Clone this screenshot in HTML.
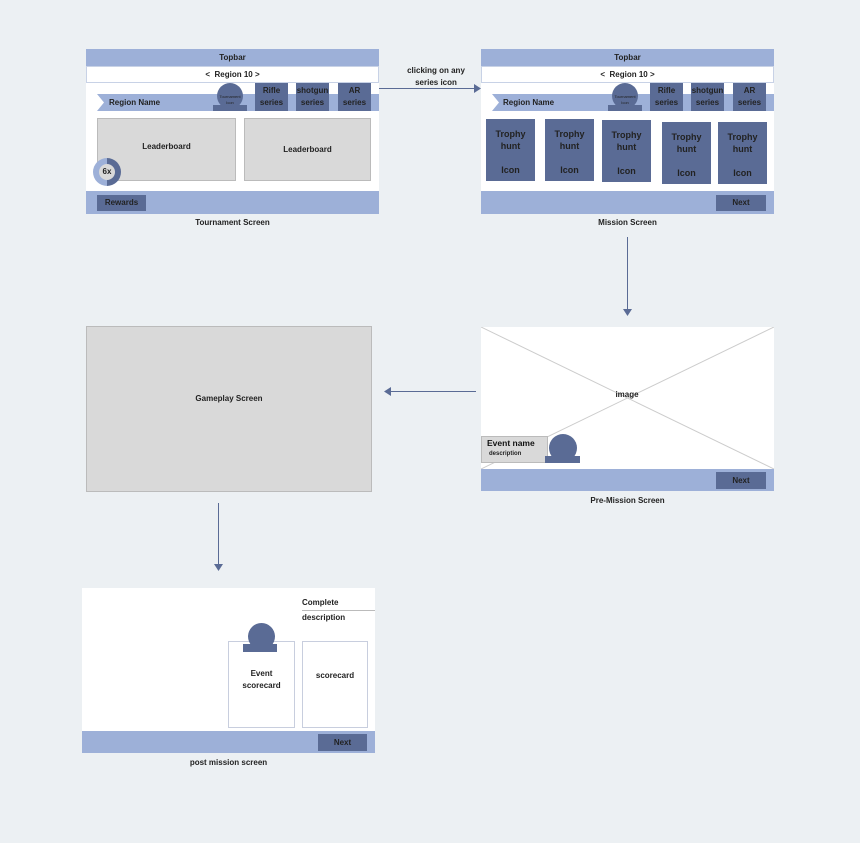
<!DOCTYPE html>
<html><head><meta charset="utf-8"><style>
*{margin:0;padding:0;box-sizing:border-box}
body{width:860px;height:843px;background:#ECF0F3;position:relative;overflow:hidden;font-family:"Liberation Sans",sans-serif;color:#222;font-weight:bold;font-size:8px}
.a{position:absolute}
.c{display:flex;align-items:center;justify-content:center;text-align:center;line-height:1.45}
.lb{background:#9DB0D8}
.dk{background:#5A6B95}
.w{background:#fff}
.lbl{font-size:8px;text-align:center}
.circ{border-radius:50%;background:#5A6B95}
.tiny{font-size:4px;color:#222;font-weight:normal}
</style></head><body>

<!-- Tournament -->
<div class="a w" style="left:86px;top:49px;width:293px;height:165px"></div>
<div class="a lb c" style="left:86px;top:49px;width:293px;height:17px">Topbar</div>
<div class="a w c" style="left:86px;top:66px;width:293px;height:17px;border:1px solid #c8d2e6">&lt;&nbsp; Region 10 &gt;</div>
<svg class="a" style="left:97px;top:94px" width="282" height="17"><polygon points="0,0 282,0 282,17 0,17 7,8.5" fill="#9DB0D8"/></svg>
<div class="a" style="left:109px;top:98px">Region Name</div>
<div class="a circ" style="left:217px;top:83px;width:26px;height:26px"></div>
<div class="a dk" style="left:213px;top:105px;width:34px;height:6px"></div>
<div class="a c tiny" style="left:215px;top:94px;width:30px;line-height:1.6">Tournament<br>Icon</div>
<div class="a dk c" style="left:255px;top:83px;width:33px;height:28px">Rifle<br>series</div>
<div class="a dk c" style="left:296px;top:83px;width:33px;height:28px">shotgun<br>series</div>
<div class="a dk c" style="left:338px;top:83px;width:33px;height:28px">AR<br>series</div>
<div class="a" style="left:97px;top:118px;width:139px;height:63px;background:#D9D9D9;border:1px solid #bbb;text-align:center;padding-top:23px">Leaderboard</div>
<div class="a c" style="left:244px;top:118px;width:127px;height:63px;background:#D9D9D9;border:1px solid #bbb">Leaderboard</div>
<div class="a" style="left:93px;top:158px;width:28px;height:28px;border-radius:50%;background:linear-gradient(90deg,#9DB0D8 50%,#5A6B95 50%)"></div>
<div class="a c" style="left:99px;top:164px;width:16px;height:16px;border-radius:50%;background:#D9D9D9">6x</div>
<div class="a lb" style="left:86px;top:191px;width:293px;height:23px"></div>
<div class="a dk c" style="left:97px;top:195px;width:49px;height:16px">Rewards</div>
<div class="a lbl" style="left:86px;top:218px;width:293px">Tournament Screen</div>

<!-- arrow right -->
<div class="a" style="left:379px;top:88px;width:96px;height:1px;background:#5A6B95"></div>
<svg class="a" style="left:474px;top:84px" width="8" height="9"><polygon points="0,0 7,4.5 0,9" fill="#5A6B95"/></svg>
<div class="a lbl" style="left:396px;top:65px;width:80px;line-height:12px">clicking on any<br>series icon</div>

<!-- Mission -->
<div class="a w" style="left:481px;top:49px;width:293px;height:165px"></div>
<div class="a lb c" style="left:481px;top:49px;width:293px;height:17px">Topbar</div>
<div class="a w c" style="left:481px;top:66px;width:293px;height:17px;border:1px solid #c8d2e6">&lt;&nbsp; Region 10 &gt;</div>
<svg class="a" style="left:492px;top:94px" width="282" height="17"><polygon points="0,0 282,0 282,17 0,17 7,8.5" fill="#9DB0D8"/></svg>
<div class="a" style="left:503px;top:98px">Region Name</div>
<div class="a circ" style="left:612px;top:83px;width:26px;height:26px"></div>
<div class="a dk" style="left:608px;top:105px;width:34px;height:6px"></div>
<div class="a c tiny" style="left:610px;top:94px;width:30px;line-height:1.6">Tournament<br>Icon</div>
<div class="a dk c" style="left:650px;top:83px;width:33px;height:28px">Rifle<br>series</div>
<div class="a dk c" style="left:691px;top:83px;width:33px;height:28px">shotgun<br>series</div>
<div class="a dk c" style="left:733px;top:83px;width:33px;height:28px">AR<br>series</div>
<div class="a dk" style="left:486px;top:119px;width:49px;height:62px;text-align:center;padding-top:9px;font-size:9px;line-height:12px">Trophy<br>hunt<br><br>Icon</div>
<div class="a dk" style="left:545px;top:119px;width:49px;height:62px;text-align:center;padding-top:9px;font-size:9px;line-height:12px">Trophy<br>hunt<br><br>Icon</div>
<div class="a dk" style="left:602px;top:120px;width:49px;height:62px;text-align:center;padding-top:9px;font-size:9px;line-height:12px">Trophy<br>hunt<br><br>Icon</div>
<div class="a dk" style="left:662px;top:122px;width:49px;height:62px;text-align:center;padding-top:9px;font-size:9px;line-height:12px">Trophy<br>hunt<br><br>Icon</div>
<div class="a dk" style="left:718px;top:122px;width:49px;height:62px;text-align:center;padding-top:9px;font-size:9px;line-height:12px">Trophy<br>hunt<br><br>Icon</div>
<div class="a lb" style="left:481px;top:191px;width:293px;height:23px"></div>
<div class="a dk c" style="left:716px;top:195px;width:50px;height:16px">Next</div>
<div class="a lbl" style="left:481px;top:218px;width:293px">Mission Screen</div>

<!-- arrow down -->
<div class="a" style="left:627px;top:237px;width:1px;height:73px;background:#5A6B95"></div>
<svg class="a" style="left:623px;top:309px" width="9" height="8"><polygon points="0,0 9,0 4.5,7" fill="#5A6B95"/></svg>

<!-- Pre-mission -->
<div class="a w" style="left:481px;top:327px;width:293px;height:164px"></div>
<svg class="a" style="left:481px;top:327px" width="293" height="142"><line x1="0" y1="0" x2="293" y2="142" stroke="#ccc" stroke-width="1"/><line x1="293" y1="0" x2="0" y2="142" stroke="#ccc" stroke-width="1"/></svg>
<div class="a c" style="left:612px;top:389px;width:30px;height:12px">image</div>
<div class="a" style="left:481px;top:436px;width:67px;height:27px;background:#D9D9D9;border:1px solid #bbb"></div>
<div class="a" style="left:487px;top:438px;font-size:8.5px;color:#111">Event name</div>
<div class="a" style="left:489px;top:451px;font-size:6px">description</div>
<div class="a circ" style="left:549px;top:434px;width:28px;height:28px"></div>
<div class="a dk" style="left:545px;top:456px;width:35px;height:7px"></div>
<div class="a lb" style="left:481px;top:469px;width:293px;height:22px"></div>
<div class="a dk c" style="left:716px;top:472px;width:50px;height:17px">Next</div>
<div class="a lbl" style="left:481px;top:496px;width:293px">Pre-Mission Screen</div>

<!-- arrow left -->
<div class="a" style="left:390px;top:391px;width:86px;height:1px;background:#5A6B95"></div>
<svg class="a" style="left:384px;top:387px" width="8" height="9"><polygon points="7,0 0,4.5 7,9" fill="#5A6B95"/></svg>

<!-- Gameplay -->
<div class="a c" style="left:86px;top:326px;width:286px;height:166px;background:#D9D9D9;border:1px solid #bbb;padding-bottom:20px">Gameplay Screen</div>

<!-- arrow down 2 -->
<div class="a" style="left:218px;top:503px;width:1px;height:62px;background:#5A6B95"></div>
<svg class="a" style="left:214px;top:564px" width="9" height="8"><polygon points="0,0 9,0 4.5,7" fill="#5A6B95"/></svg>

<!-- Post mission -->
<div class="a w" style="left:82px;top:588px;width:293px;height:165px"></div>
<div class="a" style="left:302px;top:598px">Complete</div>
<div class="a" style="left:302px;top:610px;width:73px;height:1px;background:#bbb"></div>
<div class="a" style="left:302px;top:613px">description</div>
<div class="a c" style="left:228px;top:641px;width:67px;height:87px;border:1px solid #c8cede;padding-bottom:10px">Event<br>scorecard</div>
<div class="a" style="left:302px;top:641px;width:66px;height:87px;border:1px solid #c8cede;text-align:center;padding-top:29px">scorecard</div>
<div class="a circ" style="left:248px;top:623px;width:27px;height:27px"></div>
<div class="a dk" style="left:243px;top:644px;width:34px;height:8px"></div>
<div class="a lb" style="left:82px;top:731px;width:293px;height:22px"></div>
<div class="a dk c" style="left:318px;top:734px;width:49px;height:17px">Next</div>
<div class="a lbl" style="left:82px;top:758px;width:293px">post mission screen</div>

</body></html>
